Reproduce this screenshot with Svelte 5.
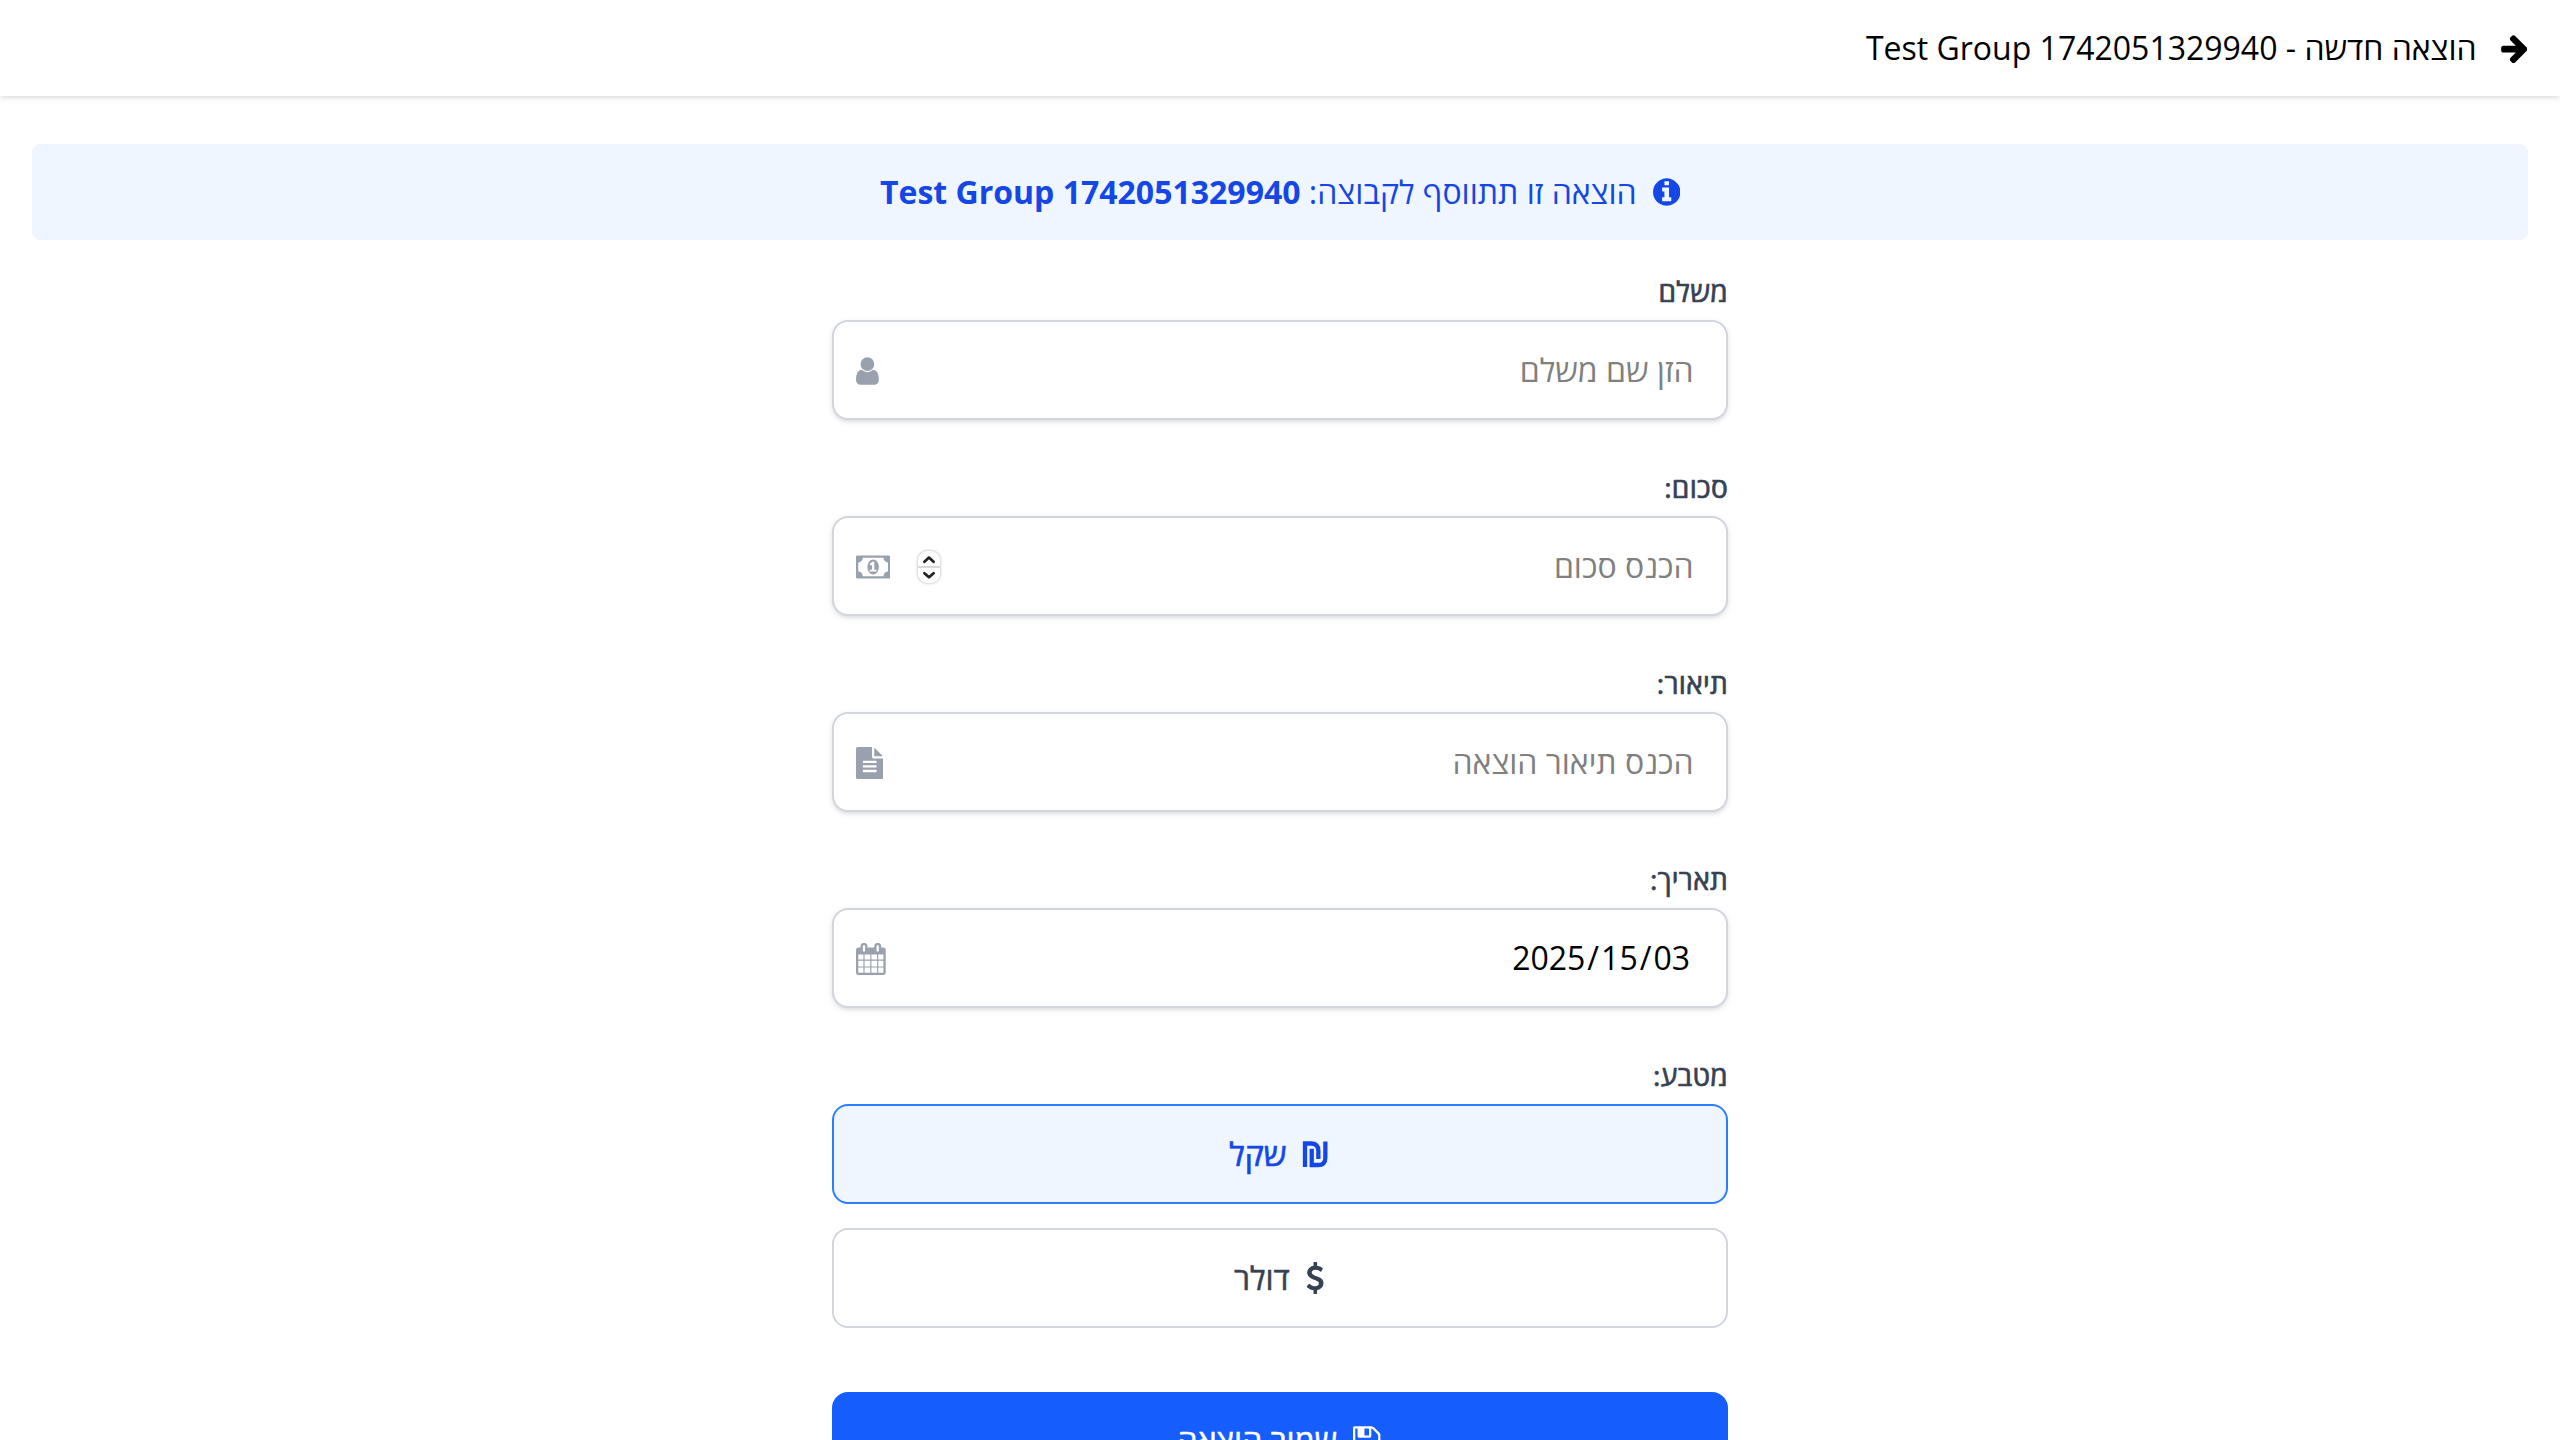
<script>
  const groupName = 'Test Group 1742051329940';
  const dateParts = ['03', '/', '15', '/', '2025'];

  // Glyph outlines on a 1792-unit em, each with its own viewBox.
  const icons = {
    arrow: {
      box: '64 0 1536 1792',
      d: 'M1600 960q0 54-37 91l-651 651q-39 37-91 37-51 0-90-37l-75-75q-38-38-38-91t38-91l293-293h-704q-52 0-84.5-37.5t-32.5-90.5v-128q0-53 32.5-90.5t84.5-37.5h704l-293-294q-38-36-38-90t38-90l75-75q38-38 90-38 53 0 91 38l651 651q37 35 37 90z'
    },
    info: {
      box: '128 0 1536 1792',
      d: 'M1152 1376v-160q0-14-9-23t-23-9h-96v-512q0-14-9-23t-23-9h-320q-14 0-23 9t-9 23v160q0 14 9 23t23 9h96v320h-96q-14 0-23 9t-9 23v160q0 14 9 23t23 9h448q14 0 23-9t9-23zm-128-896v-160q0-14-9-23t-23-9h-192q-14 0-23 9t-9 23v160q0 14 9 23t23 9h192q14 0 23-9t9-23zm640 416q0 209-103 385.5t-279.5 279.5-385.5 103-385.5-103-279.5-279.5-103-385.5 103-385.5 279.5-279.5 385.5-103 385.5 103 279.5 279.5 103 385.5z'
    },
    user: {
      box: '256 0 1280 1792',
      d: 'M1536 1399q0 109-62.5 187t-150.5 78h-854q-88 0-150.5-78t-62.5-187q0-85 8.5-160.5t31.5-152 58.5-131 94-89 134.5-34.5q131 128 313 128t313-128q76 0 134.5 34.5t94 89 58.5 131 31.5 152 8.5 160.5zm-256-887q0 159-112.5 271.5t-271.5 112.5-271.5-112.5-112.5-271.5 112.5-271.5 271.5-112.5 271.5 112.5 112.5 271.5z'
    },
    money: {
      box: '0 0 1920 1792',
      d: 'M768 1152h384v-96h-128v-448h-114l-148 137 77 80q42-37 55-57h2v288h-128v96zm512-256q0 70-21 142t-59.5 134-101.5 101-138 39-138-39-101.5-101-59.5-134-21-142 21-142 59.5-134 101.5-101 138-39 138 39 101.5 101 59.5 134 21 142zm512 256v-512q-106 0-181-75t-75-181h-1152q0 106-75 181t-181 75v512q106 0 181 75t75 181h1152q0-106 75-181t181-75zm128-832v1152q0 26-19 45t-45 19h-1792q-26 0-45-19t-19-45v-1152q0-26 19-45t45-19h1792q26 0 45 19t19 45z'
    },
    file: {
      box: '128 0 1536 1792',
      d: 'M1596 476q14 14 28 36h-472v-472q22 14 36 28zm-476 164h544v1056q0 40-28 68t-68 28h-1344q-40 0-68-28t-28-68v-1600q0-40 28-68t68-28h800v544q0 40 28 68t68 28zm160 736v-64q0-14-9-23t-23-9h-704q-14 0-23 9t-9 23v64q0 14 9 23t23 9h704q14 0 23-9t9-23zm0-256v-64q0-14-9-23t-23-9h-704q-14 0-23 9t-9 23v64q0 14 9 23t23 9h704q14 0 23-9t9-23zm0-256v-64q0-14-9-23t-23-9h-704q-14 0-23 9t-9 23v64q0 14 9 23t23 9h704q14 0 23-9t9-23z'
    },
    calendar: {
      box: '64 0 1664 1792',
      d: 'M192 1664h288v-288h-288v288zm352 0h320v-288h-320v288zm-352-352h288v-320h-288v320zm352 0h320v-320h-320v320zm-352-384h288v-288h-288v288zm736 736h320v-288h-320v288zm-384-736h320v-288h-320v288zm768 736h288v-288h-288v288zm-384-352h320v-320h-320v320zm-352-864v-288q0-13-9.5-22.5t-22.5-9.5h-64q-13 0-22.5 9.5t-9.5 22.5v288q0 13 9.5 22.5t22.5 9.5h64q13 0 22.5-9.5t9.5-22.5zm736 864h288v-320h-288v320zm-384-384h320v-288h-320v288zm384 0h288v-288h-288v288zm32-480v-288q0-13-9.5-22.5t-22.5-9.5h-64q-13 0-22.5 9.5t-9.5 22.5v288q0 13 9.5 22.5t22.5 9.5h64q13 0 22.5-9.5t9.5-22.5zm384-64v1280q0 52-38 90t-90 38h-1408q-52 0-90-38t-38-90v-1280q0-52 38-90t90-38h128v-96q0-66 47-113t113-47h64q66 0 113 47t47 113v96h384v-96q0-66 47-113t113-47h64q66 0 113 47t47 113v96h128q52 0 90 38t38 90z'
    },
    shekel: {
      box: '0 0 1472 1792',
      stroked: true,
      d: 'M168 1629V308H500Q916 308 916 724V1181M545 603V1513H890Q1308 1513 1308 1100V192'
    },
    dollar: {
      box: '384 0 1024 1792',
      d: 'M1362 1185q0 153-99.5 263.5t-258.5 136.5v175q0 14-9 23t-23 9h-135q-13 0-22.5-9.5t-9.5-22.5v-175q-66-9-127.5-31t-101.5-44.5-74-48-46.5-37.5-17.5-18q-17-21-2-41l103-135q7-10 23-12 15-2 24 9l2 2q113 99 243 125 37 8 74 8 81 0 142.5-43t61.5-122q0-28-15-53t-33.5-42-58.5-37.5-66-32-80-32.5q-39-16-61.5-25t-61.5-26.5-62.5-31-56.5-35.5-53.5-42.5-43.5-49-35.5-58-21-66.5-8.5-78q0-138 98-242t255-134v-180q0-13 9.5-22.5t22.5-9.5h135q14 0 23 9t9 23v176q57 6 110.5 23t87 33.5 63.5 37.5 39 29 15 14q17 18 5 38l-81 146q-8 15-23 16-14 3-27-7-3-3-14.5-12t-39-26.5-58.5-32-74.5-26-85.5-11.5q-95 0-155 43t-60 111q0 26 8.5 48t29.5 41.5 39.5 33 56 31 60.5 27 70 27.5q53 20 81 31.5t76 35 75.5 42.5 62 50 53 63.5 31.5 76.5 13 94z'
    },
    save: {
      box: '128 0 1536 1792',
      d: 'M512 1536h768v-384h-768v384zm896 0h128v-896q0-14-10-38.5t-20-34.5l-281-281q-10-10-34-20t-39-10v416q0 40-28 68t-68 28h-576q-40 0-68-28t-28-68v-416h-128v1280h128v-416q0-40 28-68t68-28h832q40 0 68 28t28 68v416zm-384-928v-320q0-13-9.5-22.5t-22.5-9.5h-192q-13 0-22.5 9.5t-9.5 22.5v320q0 13 9.5 22.5t22.5 9.5h192q13 0 22.5-9.5t9.5-22.5zm640 32v928q0 40-28 68t-68 28h-1344q-40 0-68-28t-28-68v-1344q0-40 28-68t68-28h928q40 0 88 20t76 48l280 280q28 28 48 76t20 88z'
    }
  };

  const fields = [
    { label: 'משלם', placeholder: 'הזן שם משלם', icon: 'user' },
    { label: 'סכום:', placeholder: 'הכנס סכום', icon: 'money', spinner: true },
    { label: 'תיאור:', placeholder: 'הכנס תיאור הוצאה', icon: 'file' },
    { label: 'תאריך:', date: true, icon: 'calendar' }
  ];

  let currency = $state('ils');
</script>

{#snippet icon(name)}
  <svg class="icon" class:stroked={icons[name].stroked} viewBox={icons[name].box} aria-hidden="true"><path d={icons[name].d} /></svg>
{/snippet}

<div class="page" dir="rtl">
  <header>
    {@render icon('arrow')}
    <h1>הוצאה חדשה - {groupName}</h1>
  </header>

  <main>
    <div class="banner">
      {@render icon('info')}
      <span>הוצאה זו תתווסף לקבוצה: <strong>{groupName}</strong></span>
    </div>

    <form>
      {#each fields as field}
        <div class="field">
          <span class="label">{field.label}</span>
          <div class="control">
            {#if field.date}
              <div class="date">
                {#each dateParts as part}<span class:digits={part !== '/'}>{part}</span>{/each}
              </div>
            {:else}
              <input type="text" placeholder={field.placeholder} />
            {/if}
            {#if field.spinner}
              <div class="spinner">
                <svg viewBox="0 0 24 16"><path d="M7 11.500l5-4.500 5 4.500" /></svg>
                <svg viewBox="0 0 24 16"><path d="M7 5.500l5 4.500 5-4.500" /></svg>
              </div>
            {/if}
            {@render icon(field.icon)}
          </div>
        </div>
      {/each}

      <div class="field currency">
        <span class="label">מטבע:</span>
        <div class="options">
          <button type="button" class="option" class:selected={currency === 'ils'} onclick={() => (currency = 'ils')}>
            {@render icon('shekel')}<span>שקל</span>
          </button>
          <button type="button" class="option" class:selected={currency === 'usd'} onclick={() => (currency = 'usd')}>
            {@render icon('dollar')}<span>דולר</span>
          </button>
        </div>
      </div>

      <button type="button" class="submit">{@render icon('save')}<span>שמור הוצאה</span></button>
    </form>
  </main>
</div>

<style>
  :global(body) {
    background: #fff;
    overflow: hidden;
  }
  .page {
    height: 1440px;
    overflow: hidden;
    box-sizing: border-box;
    font-family: 'Open Sans', 'Noto Sans', sans-serif;
    font-size: 32px;
    line-height: 48px;
    color: #000;
  }
  .icon {
    height: 32px;
    width: auto;
    flex: none;
    fill: currentColor;
    display: block;
  }
  .icon.stroked {
    fill: none;
    stroke: currentColor;
    stroke-width: 240;
    stroke-linejoin: miter;
  }
  header {
    display: flex;
    align-items: center;
    gap: 23px;
    height: 96px;
    padding: 0 33px;
    box-sizing: border-box;
    box-shadow: 0 2px 6px 0 rgb(0 0 0 / 0.1), 0 2px 4px -2px rgb(0 0 0 / 0.1);
  }
  h1 {
    margin: 0;
    font-size: 32px;
    font-weight: 400;
  }
  main {
    padding: 48px 32px 0;
  }
  .banner {
    display: flex;
    align-items: center;
    justify-content: center;
    gap: 16px;
    height: 96px;
    border-radius: 8px;
    background: #eff6ff;
    color: #1447e6;
  }
  strong {
    font-weight: 700;
  }
  form {
    width: 896px;
    margin: 32px auto 0;
    display: flex;
    flex-direction: column;
  }
  .field {
    display: flex;
    flex-direction: column;
    gap: 10px;
    margin-bottom: 48px;
  }
  .currency {
    margin-bottom: 64px;
  }
  .label {
    font-size: 28px;
    line-height: 38px;
    font-weight: 500;
    letter-spacing: 0.3px;
    -webkit-text-stroke: 0.7px currentColor;
    color: #364153;
  }
  .control {
    display: flex;
    align-items: center;
    height: 100px;
    box-sizing: border-box;
    border: 2px solid #d1d5dc;
    border-radius: 16px;
    padding: 0 32.5px 0 22px;
    background: #fff;
    box-shadow: 0 2px 6px 0 rgb(0 0 0 / 0.1), 0 2px 4px -2px rgb(0 0 0 / 0.1);
  }
  .control .icon {
    color: #99a1af;
    margin-top: 1px;
  }
  input {
    flex: 1;
    min-width: 0;
    border: 0;
    padding: 0;
    outline: 0;
    background: none;
    font: inherit;
    color: inherit;
  }
  input::placeholder {
    color: #808080;
    opacity: 1;
  }
  .date {
    flex: 1;
    display: flex;
    flex-direction: row;
    padding-right: 1.5px;
  }
  .date .digits {
    padding: 0 2px;
  }
  .spinner {
    display: flex;
    flex-direction: column;
    gap: 2px;
    width: 22px;
    margin: 2px 0 0 28px;
    border-radius: 9px;
    background: #d9d9d9;
    box-shadow: 0 0 3px rgb(0 0 0 / 0.35);
    overflow: hidden;
  }
  .spinner svg {
    display: block;
    width: 22px;
    height: 15px;
    background: #fff;
    fill: none;
    stroke: #222;
    stroke-width: 3;
    stroke-linecap: round;
    stroke-linejoin: round;
  }
  .options {
    display: flex;
    flex-direction: column;
    gap: 24px;
  }
  .option,
  .submit {
    display: flex;
    align-items: center;
    justify-content: center;
    gap: 16px;
    height: 100px;
    box-sizing: border-box;
    border: 2px solid #d1d5dc;
    border-radius: 16px;
    background: #fff;
    color: #364153;
    font: inherit;
    padding: 0 2px 0 0;
  }
  .option span,
  .submit span {
    font-weight: 500;
    -webkit-text-stroke: 0.5px currentColor;
  }
  .option.selected {
    background: #eff6ff;
    border-color: #2b7fff;
    color: #1447e6;
  }
  .option.selected span {
    -webkit-text-stroke-width: 0.7px;
  }
  .submit {
    height: 96px;
    border: 0;
    background: #155dfc;
    color: #fff;
  }
</style>
